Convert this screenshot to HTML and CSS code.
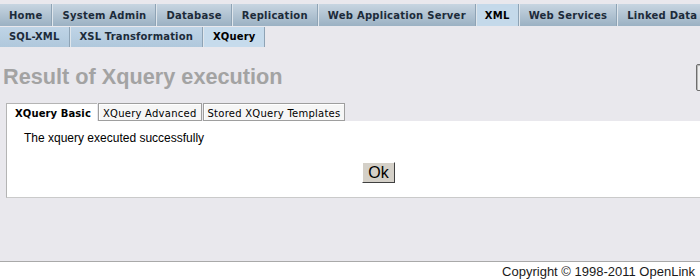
FILE: index.html
```html
<!DOCTYPE html>
<html lang="en">
<head>
<meta charset="utf-8">
<title>Result of Xquery execution</title>
<link rel="stylesheet" href="styles.css">
</head>
<body>
<div class="page">
  <nav class="nav">
    <ul class="nav-row nav-main">
      <li class="tab">Home</li>
      <li class="tab">System Admin</li>
      <li class="tab">Database</li>
      <li class="tab">Replication</li>
      <li class="tab">Web Application Server</li>
      <li class="tab active">XML</li>
      <li class="tab">Web Services</li>
      <li class="tab">Linked Data</li>
    </ul>
    <ul class="nav-row nav-sub">
      <li class="tab">SQL-XML</li>
      <li class="tab">XSL Transformation</li>
      <li class="tab active">XQuery</li>
    </ul>
  </nav>

  <div class="title-row">
    <h1 class="title">Result of Xquery execution</h1>
    <span class="side-box"></span>
  </div>

  <div class="itabs">
    <div class="itab active">XQuery Basic</div>
    <div class="itab">XQuery Advanced</div>
    <div class="itab">Stored XQuery Templates</div>
  </div>
  <div class="panel">
    <p class="msg">The xquery executed successfully</p>
    <div class="actions"><button class="ok" type="button">Ok</button></div>
  </div>

  <footer class="footer">Copyright &copy; 1998-2011 OpenLink</footer>
</div>
</body>
</html>
```
FILE: styles.css
```css
html, body {
  margin: 0;
  padding: 0;
  overflow: hidden;
  background: #e9e8ed;
}

.page {
  width: 750px;
  font-family: "Liberation Sans", Arial, sans-serif;
}

/* top navigation */
.nav {
  padding-top: 4px;
}
.nav-row {
  display: flex;
  list-style: none;
  margin: 0;
  padding: 0;
}
.nav-sub {
  margin-top: 1px;
}
.tab {
  font-family: "DejaVu Sans", Verdana, sans-serif;
  font-weight: bold;
  font-size: 10px;
  letter-spacing: 0.25px;
  color: #1c2b3a;
  padding: 0 9px;
  border-left: 1px solid #dfe6ec;
  border-right: 1px solid #8ea3b5;
  white-space: nowrap;
}
.nav-main .tab {
  height: 22px;
  line-height: 21px;
  padding-top: 1px;
  box-sizing: border-box;
  background: linear-gradient(#c7d5e1, #9bb1c3);
}
.nav-main .tab.active {
  padding-left: 8px;
  padding-right: 8px;
  background: #c4d9ea;
  color: #000;
}
.nav-sub .tab {
  height: 20px;
  line-height: 20px;
  letter-spacing: 0.15px;
  background: linear-gradient(#bfd4e6, #b0c8dc);
}
.nav-sub .tab.active {
  background: #c6dbec;
  color: #000;
}
.nav-main .tab:first-child,
.nav-sub .tab:first-child {
  border-left: 0;
}

/* title */
.title-row {
  display: flex;
  justify-content: space-between;
  align-items: flex-start;
  margin-top: 17px;
}
.title {
  margin: 0;
  padding-left: 3px;
  font-size: 21.7px;
  line-height: 26px;
  font-weight: bold;
  color: #a3a3a3;
}
.side-box {
  width: 48px;
  height: 25px;
  margin-right: 4px;
  border: 1px solid #6e6e6e;
  border-radius: 2px;
  box-shadow: inset 1px 1px 0 #b8b8b8;
  background: #efefef;
}

/* inner tabs */
.itabs {
  display: flex;
  gap: 1px;
  margin: 12px 0 0 6px;
}
.itab {
  font-family: "DejaVu Sans", Verdana, sans-serif;
  font-size: 10px;
  letter-spacing: 0.25px;
  line-height: 13px;
  padding: 3px 4px 0;
  color: #000;
  background: #f6f6f6;
  border: 1px solid #9e9e9e;
  box-shadow: inset 1px 1px 0 #ffffff;
  white-space: nowrap;
}
.itab.active {
  font-weight: bold;
  letter-spacing: 0.1px;
  background: #ffffff;
  padding: 3px 6px 1px 8px;
  border: 0;
  border-top: 1px solid #b4b4b4;
  border-left: 1px solid #b4b4b4;
  box-shadow: none;
}

.panel {
  margin-left: 6px;
  background: #ffffff;
  border-left: 1px solid #b4b4b4;
  border-bottom: 1px solid #cacaca;
  padding: 10px 0 14px 17px;
}
.msg {
  margin: 0;
  font-size: 12px;
  line-height: 14px;
  color: #000;
}
.actions {
  display: flex;
  justify-content: center;
  margin-top: 17px;
  padding-right: 17px;
}
.ok {
  font-family: "Liberation Sans", Arial, sans-serif;
  font-size: 16px;
  line-height: 17px;
  padding: 1px 5px;
  margin: 0;
  background: #d4d0c8;
  color: #000;
  border: 1px solid;
  border-color: #ffffff #404040 #404040 #ffffff;
  border-radius: 0;
}

/* footer */
.footer {
  margin-top: 63px;
  border-top: 1px solid #a9a9a9;
  background: #ffffff;
  text-align: right;
  font-size: 13px;
  line-height: 15px;
  padding: 2px 55px 1px 0;
  color: #1a1a1a;
}
```
